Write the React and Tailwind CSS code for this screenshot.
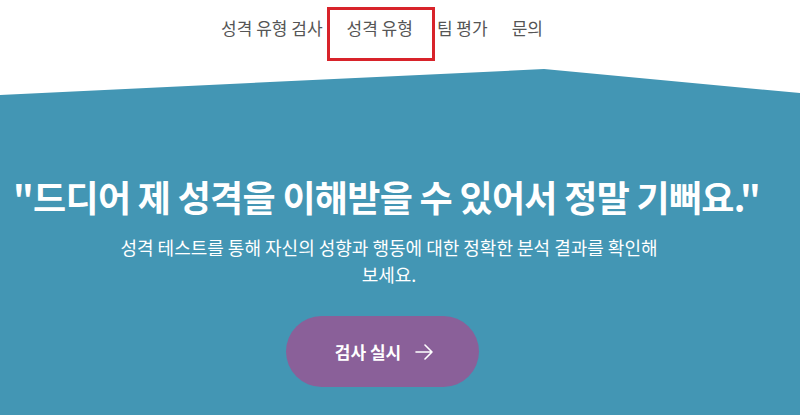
import React from "react";

const font = { fontFamily: '"Noto Sans CJK KR", "Noto Sans", sans-serif' };

const navItems = ["성격 유형 검사", "성격 유형", "팀 평가", "문의"];

const Header = () => (
  <header className="flex h-[69px] justify-center pr-[36px]">
    <nav className="flex items-start gap-[24px] pt-[15px] text-[17px] text-[#555555]">
      {navItems.map((item, i) => (
        <a key={item} className="relative leading-[26px]" href="#">
          {item}
          {i === 1 && (
            <span className="absolute -left-[20px] -right-[22px] -top-[8px] h-[54px] border-[3px] border-[#d8232a]" />
          )}
        </a>
      ))}
    </nav>
  </header>
);

const Hero = () => (
  <section className="flex h-[346px] flex-col items-center bg-[#4396b4] pr-[22px] pt-[106px] text-white [clip-path:polygon(0_26px,68%_0,100%_24px,100%_100%,0_100%)]">
    <h1 className="mr-[5px] whitespace-nowrap text-[36px] font-bold leading-[43px] tracking-[-0.7px]">
      "드디어 제 성격을 이해받을 수 있어서 정말 기뻐요."
    </h1>
    <p className="mt-[16px] w-[580px] break-keep text-center text-[18px] leading-[27px]">
      성격 테스트를 통해 자신의 성향과 행동에 대한 정확한 분석 결과를 확인해 보세요.
    </p>
    <button className="mr-[14px] mt-[28px] flex h-[71px] w-[193px] items-center justify-center gap-[14px] rounded-full bg-[#8a6099] pl-[4px] text-[17px] font-bold text-white">
      검사 실시
      <svg width="18" height="16" viewBox="0 0 18 16" fill="none" stroke="white" strokeWidth="1.6" strokeLinecap="round" strokeLinejoin="round">
        <path d="M1 8h16M10 1l7 7-7 7" />
      </svg>
    </button>
  </section>
);

export default function App() {
  return (
    <div className="h-[415px] overflow-hidden bg-white" style={font}>
      <Header />
      <Hero />
    </div>
  );
}
